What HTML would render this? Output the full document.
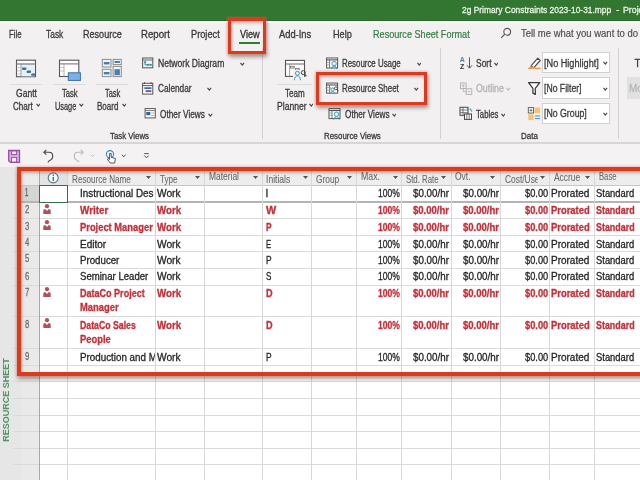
<!DOCTYPE html><html><head><meta charset="utf-8"><style>
html,body{margin:0;padding:0;width:640px;height:480px;overflow:hidden;background:#fff;position:relative;}#root{position:absolute;left:0;top:0;width:640px;height:480px;will-change:transform;}
.t{position:absolute;white-space:nowrap;line-height:1;font-family:"Liberation Sans", sans-serif;transform-origin:0 0;-webkit-text-stroke:0.3px currentColor;}
</style></head><body><div id="root">
<div style="position:absolute;left:0px;top:0px;width:640px;height:21px;background:#337631"></div>
<div style="position:absolute;left:0px;top:21px;width:640px;height:121px;background:#f2f0f0"></div>
<div style="position:absolute;left:0px;top:20px;width:640px;height:1px;background:#2c6a2f"></div>
<div style="position:absolute;left:0px;top:21px;width:640px;height:1.5px;background:#fafaf7"></div>
<div style="position:absolute;left:0px;top:142px;width:640px;height:1.5px;background:#d6d6d6"></div>
<div style="position:absolute;left:0px;top:143.5px;width:640px;height:24px;background:#f4f2f2"></div>
<div style="position:absolute;left:0px;top:167px;width:40px;height:313px;background:#e6e6e6"></div>
<div style="position:absolute;left:21px;top:171px;width:18.5px;height:309px;background:#e9e9e9"></div>
<div style="position:absolute;left:39px;top:167px;width:601px;height:18px;background:#ededed"></div>
<div style="position:absolute;left:39px;top:167px;width:28px;height:18px;background:#e3e3e3"></div>
<div style="position:absolute;left:21px;top:167px;width:18px;height:18px;background:#ebebeb"></div>
<div style="position:absolute;left:21px;top:186px;width:18px;height:15px;background:#d5d5d5"></div>
<div style="position:absolute;left:239.3px;top:41.8px;width:20.6px;height:2px;background:#2e7d32"></div>
<svg style="position:absolute;left:500px;top:27px" width="12" height="12" viewBox="0 0 12 12"><circle cx="7.2" cy="4.8" r="3.4" fill="none" stroke="#555" stroke-width="1.1"/><line x1="4.8" y1="7.2" x2="1.2" y2="10.8" stroke="#555" stroke-width="1.2"/></svg>
<svg style="position:absolute;left:35.5px;top:103.3px" width="4.6" height="4" viewBox="0 0 4.6 4"><polyline points="0.5,0.8 2.30,3 4.1,0.8" fill="none" stroke="#444" stroke-width="1.15"/></svg>
<svg style="position:absolute;left:79px;top:103.3px" width="4.6" height="4" viewBox="0 0 4.6 4"><polyline points="0.5,0.8 2.30,3 4.1,0.8" fill="none" stroke="#444" stroke-width="1.15"/></svg>
<svg style="position:absolute;left:121.8px;top:103.3px" width="4.6" height="4" viewBox="0 0 4.6 4"><polyline points="0.5,0.8 2.30,3 4.1,0.8" fill="none" stroke="#444" stroke-width="1.15"/></svg>
<svg style="position:absolute;left:308.6px;top:103.3px" width="4.6" height="4" viewBox="0 0 4.6 4"><polyline points="0.5,0.8 2.30,3 4.1,0.8" fill="none" stroke="#444" stroke-width="1.15"/></svg>
<div style="position:absolute;left:10px;top:84.2px;width:32px;height:1px;background:#dcdcdc"></div>
<div style="position:absolute;left:52.5px;top:84.2px;width:33.099999999999994px;height:1px;background:#dcdcdc"></div>
<div style="position:absolute;left:95.6px;top:84.2px;width:32.400000000000006px;height:1px;background:#dcdcdc"></div>
<div style="position:absolute;left:277.3px;top:84.2px;width:35.0px;height:1px;background:#dcdcdc"></div>
<div style="position:absolute;left:262px;top:48px;width:1px;height:91px;background:#d2d2d2"></div>
<div style="position:absolute;left:440px;top:48px;width:1px;height:91px;background:#d2d2d2"></div>
<div style="position:absolute;left:618px;top:48px;width:1px;height:91px;background:#d2d2d2"></div>
<svg style="position:absolute;left:240px;top:62.0px" width="4.6" height="4" viewBox="0 0 4.6 4"><polyline points="0.5,0.8 2.30,3 4.1,0.8" fill="none" stroke="#444" stroke-width="1.15"/></svg>
<svg style="position:absolute;left:207.2px;top:87.1px" width="4.6" height="4" viewBox="0 0 4.6 4"><polyline points="0.5,0.8 2.30,3 4.1,0.8" fill="none" stroke="#444" stroke-width="1.15"/></svg>
<svg style="position:absolute;left:208.3px;top:113.1px" width="4.6" height="4" viewBox="0 0 4.6 4"><polyline points="0.5,0.8 2.30,3 4.1,0.8" fill="none" stroke="#444" stroke-width="1.15"/></svg>
<svg style="position:absolute;left:416.5px;top:62.0px" width="4.6" height="4" viewBox="0 0 4.6 4"><polyline points="0.5,0.8 2.30,3 4.1,0.8" fill="none" stroke="#444" stroke-width="1.15"/></svg>
<svg style="position:absolute;left:414.3px;top:87.1px" width="4.6" height="4" viewBox="0 0 4.6 4"><polyline points="0.5,0.8 2.30,3 4.1,0.8" fill="none" stroke="#444" stroke-width="1.15"/></svg>
<svg style="position:absolute;left:391.5px;top:113.1px" width="4.6" height="4" viewBox="0 0 4.6 4"><polyline points="0.5,0.8 2.30,3 4.1,0.8" fill="none" stroke="#444" stroke-width="1.15"/></svg>
<svg style="position:absolute;left:493.5px;top:62.0px" width="4.6" height="4" viewBox="0 0 4.6 4"><polyline points="0.5,0.8 2.30,3 4.1,0.8" fill="none" stroke="#444" stroke-width="1.15"/></svg>
<svg style="position:absolute;left:506px;top:87.1px" width="4.6" height="4" viewBox="0 0 4.6 4"><polyline points="0.5,0.8 2.30,3 4.1,0.8" fill="none" stroke="#bbb" stroke-width="1.15"/></svg>
<svg style="position:absolute;left:500.8px;top:113.1px" width="4.6" height="4" viewBox="0 0 4.6 4"><polyline points="0.5,0.8 2.30,3 4.1,0.8" fill="none" stroke="#444" stroke-width="1.15"/></svg>
<div style="position:absolute;left:542.1px;top:52.3px;width:67.6px;height:21.200000000000003px;background:#fff;border:1px solid #d0d0d0;box-sizing:border-box"></div>
<svg style="position:absolute;left:603.3px;top:61.4px" width="4.6" height="4" viewBox="0 0 4.6 4"><polyline points="0.5,0.8 2.30,3 4.1,0.8" fill="none" stroke="#444" stroke-width="1.15"/></svg>
<div style="position:absolute;left:542.1px;top:77.3px;width:67.6px;height:21.5px;background:#fff;border:1px solid #d0d0d0;box-sizing:border-box"></div>
<svg style="position:absolute;left:603.3px;top:86.55px" width="4.6" height="4" viewBox="0 0 4.6 4"><polyline points="0.5,0.8 2.30,3 4.1,0.8" fill="none" stroke="#444" stroke-width="1.15"/></svg>
<div style="position:absolute;left:542.1px;top:102.5px;width:67.6px;height:21.599999999999994px;background:#fff;border:1px solid #d0d0d0;box-sizing:border-box"></div>
<svg style="position:absolute;left:603.3px;top:111.8px" width="4.6" height="4" viewBox="0 0 4.6 4"><polyline points="0.5,0.8 2.30,3 4.1,0.8" fill="none" stroke="#444" stroke-width="1.15"/></svg>
<div style="position:absolute;left:627.3px;top:77.2px;width:14px;height:22px;background:#e1e1e1"></div>
<div style="position:absolute;left:13px;top:218px;width:627px;height:1px;background:#dadada"></div>
<div style="position:absolute;left:13px;top:235px;width:627px;height:1px;background:#dadada"></div>
<div style="position:absolute;left:13px;top:251px;width:627px;height:1px;background:#dadada"></div>
<div style="position:absolute;left:13px;top:268px;width:627px;height:1px;background:#dadada"></div>
<div style="position:absolute;left:13px;top:285px;width:627px;height:1px;background:#dadada"></div>
<div style="position:absolute;left:13px;top:316px;width:627px;height:1px;background:#dadada"></div>
<div style="position:absolute;left:13px;top:348px;width:627px;height:1px;background:#dadada"></div>
<div style="position:absolute;left:13px;top:365px;width:627px;height:1px;background:#dadada"></div>
<div style="position:absolute;left:13px;top:381px;width:627px;height:1px;background:#dadada"></div>
<div style="position:absolute;left:13px;top:398px;width:627px;height:1px;background:#dadada"></div>
<div style="position:absolute;left:13px;top:415px;width:627px;height:1px;background:#dadada"></div>
<div style="position:absolute;left:13px;top:431px;width:627px;height:1px;background:#dadada"></div>
<div style="position:absolute;left:13px;top:448px;width:627px;height:1px;background:#dadada"></div>
<div style="position:absolute;left:13px;top:464px;width:627px;height:1px;background:#dadada"></div>
<div style="position:absolute;left:21px;top:185px;width:619px;height:1px;background:#c6c6c6"></div>
<div style="position:absolute;left:21px;top:201px;width:619px;height:2px;background:#b4b4b4"></div>
<div style="position:absolute;left:39px;top:171px;width:1px;height:309px;background:#a8a8a8"></div>
<div style="position:absolute;left:67px;top:171px;width:1px;height:309px;background:#d8d8d8"></div>
<div style="position:absolute;left:155px;top:171px;width:1px;height:309px;background:#d8d8d8"></div>
<div style="position:absolute;left:204px;top:171px;width:1px;height:309px;background:#d8d8d8"></div>
<div style="position:absolute;left:262px;top:171px;width:1px;height:309px;background:#d8d8d8"></div>
<div style="position:absolute;left:311px;top:171px;width:1px;height:309px;background:#d8d8d8"></div>
<div style="position:absolute;left:356px;top:171px;width:1px;height:309px;background:#d8d8d8"></div>
<div style="position:absolute;left:401px;top:171px;width:1px;height:309px;background:#d8d8d8"></div>
<div style="position:absolute;left:451px;top:171px;width:1px;height:309px;background:#d8d8d8"></div>
<div style="position:absolute;left:500px;top:171px;width:1px;height:309px;background:#d8d8d8"></div>
<div style="position:absolute;left:549px;top:171px;width:1px;height:309px;background:#d8d8d8"></div>
<div style="position:absolute;left:594px;top:171px;width:1px;height:309px;background:#d8d8d8"></div>
<div style="position:absolute;left:39px;top:185px;width:29px;height:18px;border:1.6px solid #35704a;box-sizing:border-box;background:#fff"></div>
<svg style="position:absolute;left:47px;top:171.5px" width="12" height="12" viewBox="0 0 12 12"><circle cx="6.2" cy="5.9" r="5" fill="#f4fbfd" stroke="#557a8e" stroke-width="1.1"/><rect x="5.7" y="4.9" width="1.1" height="4" fill="#2f3f4f"/><circle cx="6.25" cy="3.3" r="0.7" fill="#2f3f4f"/></svg>
<svg style="position:absolute;left:146px;top:176.2px" width="5" height="3" viewBox="0 0 5 3"><polygon points="0,0 5,0 2.5,3" fill="#555"/></svg>
<svg style="position:absolute;left:195px;top:176.2px" width="5" height="3" viewBox="0 0 5 3"><polygon points="0,0 5,0 2.5,3" fill="#555"/></svg>
<svg style="position:absolute;left:253px;top:176.2px" width="5" height="3" viewBox="0 0 5 3"><polygon points="0,0 5,0 2.5,3" fill="#555"/></svg>
<svg style="position:absolute;left:302.5px;top:176.2px" width="5" height="3" viewBox="0 0 5 3"><polygon points="0,0 5,0 2.5,3" fill="#555"/></svg>
<svg style="position:absolute;left:347px;top:176.2px" width="5" height="3" viewBox="0 0 5 3"><polygon points="0,0 5,0 2.5,3" fill="#555"/></svg>
<svg style="position:absolute;left:392.5px;top:176.2px" width="5" height="3" viewBox="0 0 5 3"><polygon points="0,0 5,0 2.5,3" fill="#555"/></svg>
<svg style="position:absolute;left:441.2px;top:176.2px" width="5" height="3" viewBox="0 0 5 3"><polygon points="0,0 5,0 2.5,3" fill="#555"/></svg>
<svg style="position:absolute;left:490px;top:176.2px" width="5" height="3" viewBox="0 0 5 3"><polygon points="0,0 5,0 2.5,3" fill="#555"/></svg>
<svg style="position:absolute;left:539.5px;top:176.2px" width="5" height="3" viewBox="0 0 5 3"><polygon points="0,0 5,0 2.5,3" fill="#555"/></svg>
<svg style="position:absolute;left:585px;top:176.2px" width="5" height="3" viewBox="0 0 5 3"><polygon points="0,0 5,0 2.5,3" fill="#555"/></svg>
<svg style="position:absolute;left:43.3px;top:203.5px" width="8" height="10" viewBox="0 0 8 10"><circle cx="4" cy="2.2" r="2.1" fill="#b0505a"/><path d="M0.3,10 L0.3,6.8 Q0.3,5 2.2,4.9 L4,6.9 L5.8,4.9 Q7.7,5 7.7,6.8 L7.7,10 Z" fill="#b0505a"/></svg>
<svg style="position:absolute;left:43.3px;top:220px" width="8" height="10" viewBox="0 0 8 10"><circle cx="4" cy="2.2" r="2.1" fill="#b0505a"/><path d="M0.3,10 L0.3,6.8 Q0.3,5 2.2,4.9 L4,6.9 L5.8,4.9 Q7.7,5 7.7,6.8 L7.7,10 Z" fill="#b0505a"/></svg>
<svg style="position:absolute;left:43.3px;top:287px" width="8" height="10" viewBox="0 0 8 10"><circle cx="4" cy="2.2" r="2.1" fill="#b0505a"/><path d="M0.3,10 L0.3,6.8 Q0.3,5 2.2,4.9 L4,6.9 L5.8,4.9 Q7.7,5 7.7,6.8 L7.7,10 Z" fill="#b0505a"/></svg>
<svg style="position:absolute;left:43.3px;top:318px" width="8" height="10" viewBox="0 0 8 10"><circle cx="4" cy="2.2" r="2.1" fill="#b0505a"/><path d="M0.3,10 L0.3,6.8 Q0.3,5 2.2,4.9 L4,6.9 L5.8,4.9 Q7.7,5 7.7,6.8 L7.7,10 Z" fill="#b0505a"/></svg>
<div style="position:absolute;left:-39.5px;top:395px;width:90px;height:10px;transform:rotate(-90deg);transform-origin:45px 5px;font-family:'Liberation Sans',sans-serif;font-size:9px;font-weight:700;color:#529466;text-align:center;line-height:10px;white-space:nowrap">RESOURCE SHEET</div>
<svg style="position:absolute;left:0;top:0" width="640" height="480" viewBox="0 0 640 480"><rect x="16.5" y="60.2" width="19" height="16.5" fill="#fff" stroke="#555" stroke-width="1.1"/><rect x="21.2" y="64.3" width="13.8" height="12" fill="#e3f1fa"/><line x1="16.5" y1="64" x2="35.5" y2="64" stroke="#8a8a8a" stroke-width="1.4"/><line x1="21" y1="64" x2="21" y2="76.7" stroke="#888" stroke-width="0.8"/><line x1="16.5" y1="67.5" x2="21" y2="67.5" stroke="#aaa" stroke-width="0.7"/><line x1="16.5" y1="70.8" x2="21" y2="70.8" stroke="#aaa" stroke-width="0.7"/><line x1="16.5" y1="74" x2="21" y2="74" stroke="#aaa" stroke-width="0.7"/><rect x="22" y="67.6" width="4.4" height="2.3" rx="0.8" fill="#3d6e9c"/><rect x="26.6" y="70.6" width="4.4" height="2.3" rx="0.8" fill="#3d6e9c"/><rect x="31.2" y="73.4" width="4.4" height="2.3" rx="0.8" fill="#3d6e9c"/><rect x="59.5" y="60.2" width="19.3" height="16.3" fill="#fff" stroke="#555" stroke-width="1.1"/><line x1="59.5" y1="63.9" x2="78.8" y2="63.9" stroke="#777" stroke-width="1.1"/><line x1="64" y1="63.9" x2="64" y2="76.5" stroke="#999" stroke-width="0.8"/><line x1="59.5" y1="67.5" x2="64" y2="67.5" stroke="#aaa" stroke-width="0.7"/><line x1="59.5" y1="71" x2="64" y2="71" stroke="#aaa" stroke-width="0.7"/><rect x="68.3" y="72.8" width="12.1" height="7.6" fill="#78b2e6" stroke="#3d6ea3" stroke-width="1"/><rect x="102.3" y="59.4" width="8.7" height="7.6" fill="#eef4f8" stroke="#8c8c8c" stroke-width="1"/><rect x="113.1" y="59.4" width="8.2" height="5.2" fill="#eef4f8" stroke="#8c8c8c" stroke-width="1"/><rect x="102.3" y="69.3" width="8.7" height="7.3" fill="#eef4f8" stroke="#8c8c8c" stroke-width="1"/><rect x="113.1" y="66.4" width="8.2" height="10.2" fill="#eef4f8" stroke="#8c8c8c" stroke-width="1"/><rect x="103.8" y="62" width="5.7" height="2.4" fill="#4a7db0"/><rect x="114.5" y="61" width="5.4" height="2" fill="#4a7db0"/><rect x="103.8" y="72" width="5.7" height="2.4" fill="#4a7db0"/><rect x="114.5" y="69.2" width="5.4" height="6" fill="#4a7db0"/><rect x="142.6" y="58" width="10.2" height="9.8" fill="#e9f6fb" stroke="#555" stroke-width="1"/><line x1="142.6" y1="60" x2="152.8" y2="60" stroke="#666" stroke-width="1"/><path d="M145,61.5 V64.8 H147.2 M147.2,64.8 H151" stroke="#3b8a9c" stroke-width="1" fill="none"/><circle cx="145.2" cy="62" r="1" fill="#3b8a9c"/><circle cx="147.8" cy="64.8" r="1.1" fill="#3b8a9c"/><circle cx="150.8" cy="64.8" r="1.1" fill="#3b8a9c"/><rect x="142.6" y="83.3" width="10.2" height="10.8" fill="#fff" stroke="#555" stroke-width="1"/><line x1="142.6" y1="85.6" x2="152.8" y2="85.6" stroke="#555" stroke-width="1"/><line x1="144.5" y1="82.3" x2="144.5" y2="84" stroke="#444" stroke-width="1"/><line x1="151" y1="82.3" x2="151" y2="84" stroke="#444" stroke-width="1"/><rect x="144.3" y="87.2" width="7.2" height="1.9" fill="#3c74b0"/><rect x="145.6" y="90.2" width="5.8" height="1.9" fill="#8a4aa3"/><rect x="145.1" y="108.6" width="10.2" height="9.3" fill="#fff" stroke="#555" stroke-width="1"/><line x1="145.1" y1="110.6" x2="155.3" y2="110.6" stroke="#777" stroke-width="1"/><rect x="146.3" y="112" width="4" height="3.2" fill="#2d5f9a"/><line x1="151.2" y1="113" x2="154.6" y2="113" stroke="#999" stroke-width="0.8"/><line x1="151.2" y1="115.5" x2="154.6" y2="115.5" stroke="#999" stroke-width="0.8"/><rect x="285.5" y="60.4" width="19" height="16" fill="#fff" stroke="#555" stroke-width="1.1"/><line x1="285.5" y1="64" x2="304.5" y2="64" stroke="#666" stroke-width="1"/><line x1="289.6" y1="64" x2="289.6" y2="76.4" stroke="#888" stroke-width="0.8"/><rect x="290.6" y="66.3" width="3.6" height="1.8" fill="none" stroke="#666" stroke-width="0.8"/><rect x="295.6" y="68.3" width="3.6" height="1.8" fill="none" stroke="#666" stroke-width="0.8"/><rect x="293" y="70" width="11" height="10.8" fill="#f3f2f1"/><circle cx="297.4" cy="73.3" r="2" fill="#e2f3f8" stroke="#3e9bb5" stroke-width="1"/><path d="M294.3,80.3 Q294.8,75.8 297.4,75.8 Q300,75.8 300.5,80.3" fill="none" stroke="#3e9bb5" stroke-width="1"/><circle cx="303.3" cy="72.6" r="2" fill="none" stroke="#444" stroke-width="1"/><line x1="304.7" y1="74.1" x2="306.4" y2="76.4" stroke="#444" stroke-width="1.1"/><rect x="326.6" y="58" width="11" height="10" fill="#fff" stroke="#555" stroke-width="1"/><line x1="326.6" y1="59.9" x2="337.6" y2="59.9" stroke="#555" stroke-width="1.1"/><line x1="329.6" y1="59.9" x2="329.6" y2="68" stroke="#666" stroke-width="0.9"/><line x1="326.6" y1="62.5" x2="329.6" y2="62.5" stroke="#888" stroke-width="0.7"/><line x1="326.6" y1="65" x2="329.6" y2="65" stroke="#888" stroke-width="0.7"/><circle cx="334.1" cy="63.6" r="2.2" fill="#e0f4fa" stroke="#3e9bb5" stroke-width="1"/><path d="M331.40000000000003,69 Q331.90000000000003,66 334.1,66 Q336.3,66 336.8,69" fill="none" stroke="#3e9bb5" stroke-width="1"/><rect x="326.6" y="83.1" width="11" height="10" fill="#fff" stroke="#555" stroke-width="1"/><line x1="326.6" y1="85.0" x2="337.6" y2="85.0" stroke="#555" stroke-width="1.1"/><line x1="329.6" y1="85.0" x2="329.6" y2="93.1" stroke="#666" stroke-width="0.9"/><line x1="326.6" y1="87.6" x2="329.6" y2="87.6" stroke="#888" stroke-width="0.7"/><line x1="326.6" y1="90.1" x2="329.6" y2="90.1" stroke="#888" stroke-width="0.7"/><line x1="329.6" y1="88.1" x2="333.6" y2="88.1" stroke="#888" stroke-width="0.7"/><circle cx="332.6" cy="89.69999999999999" r="1.6" fill="#e0f4fa" stroke="#3e9bb5" stroke-width="0.9"/><path d="M330.40000000000003,94.1 Q330.8,91.5 332.6,91.5 Q334.40000000000003,91.5 334.8,94.1" fill="none" stroke="#3e9bb5" stroke-width="0.9"/><circle cx="335.90000000000003" cy="88.3" r="1.5" fill="none" stroke="#444" stroke-width="0.9"/><line x1="336.90000000000003" y1="89.39999999999999" x2="338.40000000000003" y2="91.1" stroke="#444" stroke-width="1"/><rect x="329" y="108.6" width="11" height="10" fill="#fff" stroke="#555" stroke-width="1"/><line x1="329" y1="110.5" x2="340" y2="110.5" stroke="#555" stroke-width="1.1"/><line x1="332" y1="110.5" x2="332" y2="118.6" stroke="#666" stroke-width="0.9"/><line x1="329" y1="113.1" x2="332" y2="113.1" stroke="#888" stroke-width="0.7"/><line x1="329" y1="115.6" x2="332" y2="115.6" stroke="#888" stroke-width="0.7"/><circle cx="336.5" cy="114.19999999999999" r="2.2" fill="#e0f4fa" stroke="#3e9bb5" stroke-width="1"/><path d="M333.8,119.6 Q334.3,116.6 336.5,116.6 Q338.7,116.6 339.2,119.6" fill="none" stroke="#3e9bb5" stroke-width="1"/><text x="459.8" y="61.8" font-family="Liberation Sans" font-size="7" font-weight="700" fill="#3f86c0">A</text><text x="460" y="68.7" font-family="Liberation Sans" font-size="7" font-weight="700" fill="#333">Z</text><line x1="469.5" y1="57.3" x2="469.5" y2="68" stroke="#555" stroke-width="1"/><polyline points="467,65.3 469.5,68.2 472,65.3" fill="none" stroke="#555" stroke-width="1"/><rect x="460.5" y="83" width="5.6" height="5.6" fill="none" stroke="#b0b0b0" stroke-width="0.9"/><path d="M461.8,85.8 H464.8 M463.3,84.3 V87.3" stroke="#b0b0b0" stroke-width="0.8"/><rect x="466.2" y="88.8" width="5.6" height="5.6" fill="none" stroke="#b0b0b0" stroke-width="0.9"/><path d="M467.5,91.6 H470.5" stroke="#b0b0b0" stroke-width="0.8"/><path d="M463.3,88.6 V91.6 H466.2" fill="none" stroke="#b0b0b0" stroke-width="0.8"/><rect x="460" y="107.3" width="8" height="8" fill="#fff" stroke="#444" stroke-width="1"/><path d="M460,110 H468 M460,112.7 H468 M463,107.3 V115.3" stroke="#555" stroke-width="0.8"/><rect x="464.5" y="114" width="7" height="5.4" fill="#fff" stroke="#444" stroke-width="1"/><path d="M466.8,114 V119.4 M469.2,114 V119.4" stroke="#555" stroke-width="0.8"/><path d="M467,108 L469,110.2 M470,108.5 L472,111.5" stroke="#3e9bb5" stroke-width="1.1"/><path d="M531.2,65.6 L537.8,58.2 L540.2,60.5 L533.6,67.9 Z" fill="#fff" stroke="#4a4a4a" stroke-width="1.2" stroke-linejoin="round"/><path d="M531.2,65.6 L533.6,67.9 L529.5,68.6 Z" fill="#e58a2e" stroke="#c96f1c" stroke-width="0.6"/><path d="M528.4,68.6 Q532,66.6 535,68 Q537.5,69 540.5,68.2" fill="none" stroke="#e89a3c" stroke-width="1.4"/><path d="M528.6,82.6 H539.7 L535.3,88.4 V94.4 L532.9,93.1 V88.4 Z" fill="#fff" stroke="#3a3a3a" stroke-width="1.25" stroke-linejoin="round"/><rect x="528.3" y="107.6" width="5.3" height="5.4" fill="#fff" stroke="#555" stroke-width="0.9"/><path d="M529.5,110.3 H532.4 M531,108.8 V111.8" stroke="#555" stroke-width="0.8"/><rect x="534.6" y="107.6" width="5.4" height="5.4" fill="#f6c46e"/><rect x="528.3" y="114.3" width="5.3" height="5.8" fill="#f6c46e"/><path d="M535,116 H540 M535,118.6 H540" stroke="#4c8cc8" stroke-width="1"/><path d="M8.7,150.5 H19.5 V162.3 H10.3 L8.7,160.7 Z" fill="#d9aee3" stroke="#9a4ea6" stroke-width="1.3"/><rect x="11.6" y="151" width="5" height="3.6" fill="#f8ecfa" stroke="#9a4ea6" stroke-width="1"/><rect x="11.6" y="157.6" width="5" height="4.4" fill="#fff" stroke="#9a4ea6" stroke-width="1"/><path d="M44.5,152.3 H49 Q52.7,152.3 52.7,156 Q52.7,159.5 49.5,160.5 L47.8,162.5" fill="none" stroke="#444" stroke-width="1.1"/><polyline points="46.3,150 43.8,152.3 46.3,154.6" fill="none" stroke="#444" stroke-width="1.1"/><path d="M81.5,152.3 H78 Q74.3,152.3 74.3,156 Q74.3,159.5 77.5,160.5 L79.2,162" fill="none" stroke="#b8b8b8" stroke-width="1.1"/><polyline points="80.7,150 83.2,152.3 80.7,154.6" fill="none" stroke="#b8b8b8" stroke-width="1.1"/><polyline points="90.6,154.8 92.5,156.6 94.4,154.8" fill="none" stroke="#bbb" stroke-width="0.9"/><circle cx="110" cy="154.2" r="3.6" fill="none" stroke="#3d86c6" stroke-width="1.1"/><path d="M109.6,153.5 V159.5 L108,158.4 L107.5,159.5 L110.3,163 H114.6 L115.4,158.5 L111.2,157.3 V153.5 Z" fill="#fff" stroke="#444" stroke-width="0.9"/><polyline points="121.8,154.8 123.7,156.6 125.6,154.8" fill="none" stroke="#444" stroke-width="1"/><line x1="144.2" y1="153.6" x2="148.8" y2="153.6" stroke="#444" stroke-width="0.9"/><polyline points="144.3,155.6 146.5,157.8 148.7,155.6" fill="none" stroke="#444" stroke-width="1"/></svg>
<span class="t" style="left:461.90px;top:5.00px;font-size:9.4px;color:#eaf5e6;font-weight:400;transform:scaleX(0.8942);">2g Primary Constraints 2023-10-31.mpp</span>
<span class="t" style="left:616.00px;top:5.00px;font-size:9.4px;color:#eaf5e6;font-weight:400;transform:scaleX(1.1200);">-</span>
<span class="t" style="left:622.80px;top:5.00px;font-size:9.4px;color:#eaf5e6;font-weight:400;transform:scaleX(0.9365);">Proje</span>
<span class="t" style="left:8.75px;top:29.00px;font-size:10.5px;color:#3a3a3a;font-weight:400;transform:scaleX(0.7387);">File</span>
<span class="t" style="left:45.90px;top:29.00px;font-size:10.5px;color:#3a3a3a;font-weight:400;transform:scaleX(0.8012);">Task</span>
<span class="t" style="left:82.50px;top:29.00px;font-size:10.5px;color:#3a3a3a;font-weight:400;transform:scaleX(0.8620);">Resource</span>
<span class="t" style="left:141.00px;top:29.00px;font-size:10.5px;color:#3a3a3a;font-weight:400;transform:scaleX(0.9202);">Report</span>
<span class="t" style="left:190.50px;top:29.00px;font-size:10.5px;color:#3a3a3a;font-weight:400;transform:scaleX(0.8795);">Project</span>
<span class="t" style="left:239.50px;top:29.00px;font-size:10.5px;color:#333;font-weight:400;transform:scaleX(0.8747);">View</span>
<span class="t" style="left:279.40px;top:29.00px;font-size:10.5px;color:#3a3a3a;font-weight:400;transform:scaleX(0.8898);">Add-Ins</span>
<span class="t" style="left:332.50px;top:29.00px;font-size:10.5px;color:#3a3a3a;font-weight:400;transform:scaleX(0.8677);">Help</span>
<span class="t" style="left:373.30px;top:29.00px;font-size:10.5px;color:#327d40;font-weight:400;transform:scaleX(0.8675);-webkit-text-stroke:0.2px currentColor;">Resource Sheet Format</span>
<span class="t" style="left:520.60px;top:28.00px;font-size:10.5px;color:#4a4a4a;font-weight:400;transform:scaleX(0.9029);-webkit-text-stroke:0.15px currentColor;">Tell me what you want to do</span>
<span class="t" style="left:15.60px;top:89.00px;font-size:10px;color:#3a3a3a;font-weight:400;transform:scaleX(0.8542);">Gantt</span>
<span class="t" style="left:12.70px;top:102.00px;font-size:10px;color:#3a3a3a;font-weight:400;transform:scaleX(0.8056);">Chart</span>
<span class="t" style="left:61.50px;top:89.00px;font-size:10px;color:#3a3a3a;font-weight:400;transform:scaleX(0.7587);">Task</span>
<span class="t" style="left:54.80px;top:102.00px;font-size:10px;color:#3a3a3a;font-weight:400;transform:scaleX(0.7369);">Usage</span>
<span class="t" style="left:104.50px;top:89.00px;font-size:10px;color:#3a3a3a;font-weight:400;transform:scaleX(0.7441);">Task</span>
<span class="t" style="left:97.40px;top:102.00px;font-size:10px;color:#3a3a3a;font-weight:400;transform:scaleX(0.8000);">Board</span>
<span class="t" style="left:285.30px;top:89.00px;font-size:10px;color:#3a3a3a;font-weight:400;transform:scaleX(0.8056);">Team</span>
<span class="t" style="left:276.60px;top:102.00px;font-size:10px;color:#3a3a3a;font-weight:400;transform:scaleX(0.8587);">Planner</span>
<span class="t" style="left:109.80px;top:132.00px;font-size:9.0px;color:#3a3a3a;font-weight:400;transform:scaleX(0.8694);">Task Views</span>
<span class="t" style="left:323.50px;top:132.00px;font-size:9.0px;color:#3a3a3a;font-weight:400;transform:scaleX(0.8755);">Resource Views</span>
<span class="t" style="left:520.60px;top:132.00px;font-size:9.0px;color:#3a3a3a;font-weight:400;transform:scaleX(0.8887);">Data</span>
<span class="t" style="left:157.80px;top:59.00px;font-size:10px;color:#3a3a3a;font-weight:400;transform:scaleX(0.8583);">Network Diagram</span>
<span class="t" style="left:157.80px;top:84.00px;font-size:10px;color:#3a3a3a;font-weight:400;transform:scaleX(0.8253);">Calendar</span>
<span class="t" style="left:160.00px;top:110.00px;font-size:10px;color:#3a3a3a;font-weight:400;transform:scaleX(0.8288);">Other Views</span>
<span class="t" style="left:342.25px;top:59.00px;font-size:10px;color:#3a3a3a;font-weight:400;transform:scaleX(0.7888);">Resource Usage</span>
<span class="t" style="left:342.25px;top:84.00px;font-size:10px;color:#3a3a3a;font-weight:400;transform:scaleX(0.7913);">Resource Sheet</span>
<span class="t" style="left:344.70px;top:110.00px;font-size:10px;color:#3a3a3a;font-weight:400;transform:scaleX(0.8196);">Other Views</span>
<span class="t" style="left:475.50px;top:59.00px;font-size:10px;color:#3a3a3a;font-weight:400;transform:scaleX(0.8450);">Sort</span>
<span class="t" style="left:476.00px;top:84.00px;font-size:10px;color:#b4b4b4;font-weight:400;transform:scaleX(0.8805);">Outline</span>
<span class="t" style="left:476.40px;top:110.00px;font-size:10px;color:#3a3a3a;font-weight:400;transform:scaleX(0.7715);">Tables</span>
<span class="t" style="left:544.40px;top:59.00px;font-size:10px;color:#3a3a3a;font-weight:400;transform:scaleX(0.9129);">[No Highlight]</span>
<span class="t" style="left:544.40px;top:84.00px;font-size:10px;color:#3a3a3a;font-weight:400;transform:scaleX(0.8652);">[No Filter]</span>
<span class="t" style="left:544.40px;top:109.00px;font-size:10px;color:#3a3a3a;font-weight:400;transform:scaleX(0.8749);">[No Group]</span>
<span class="t" style="left:634.50px;top:59.00px;font-size:10px;color:#3a3a3a;font-weight:400;">T</span>
<span class="t" style="left:629.00px;top:84.00px;font-size:10px;color:#b8b8b8;font-weight:400;">Mo</span>
<span class="t" style="left:71.50px;top:175.00px;font-size:10.2px;color:#6b6b6b;font-weight:400;transform:scaleX(0.8002);-webkit-text-stroke:0.1px currentColor;">Resource Name</span>
<span class="t" style="left:159.50px;top:175.00px;font-size:10.2px;color:#6b6b6b;font-weight:400;transform:scaleX(0.7921);-webkit-text-stroke:0.1px currentColor;">Type</span>
<span class="t" style="left:208.75px;top:172.00px;font-size:10.2px;color:#6b6b6b;font-weight:400;transform:scaleX(0.8279);-webkit-text-stroke:0.1px currentColor;">Material</span>
<span class="t" style="left:266.25px;top:175.00px;font-size:10.2px;color:#6b6b6b;font-weight:400;transform:scaleX(0.8394);-webkit-text-stroke:0.1px currentColor;">Initials</span>
<span class="t" style="left:315.50px;top:175.00px;font-size:10.2px;color:#6b6b6b;font-weight:400;transform:scaleX(0.8207);-webkit-text-stroke:0.1px currentColor;">Group</span>
<span class="t" style="left:360.90px;top:172.00px;font-size:10.2px;color:#6b6b6b;font-weight:400;transform:scaleX(0.8606);-webkit-text-stroke:0.1px currentColor;">Max.</span>
<span class="t" style="left:406.25px;top:175.00px;font-size:10.2px;color:#6b6b6b;font-weight:400;transform:scaleX(0.7650);-webkit-text-stroke:0.1px currentColor;">Std. Rate</span>
<span class="t" style="left:455.00px;top:172.00px;font-size:10.2px;color:#6b6b6b;font-weight:400;transform:scaleX(0.8294);-webkit-text-stroke:0.1px currentColor;">Ovt.</span>
<span class="t" style="left:504.50px;top:175.00px;font-size:10.2px;color:#6b6b6b;font-weight:400;transform:scaleX(0.8233);clip-path:inset(-5px 2.06px -5px -5px);-webkit-text-stroke:0.1px currentColor;">Cost/Use</span>
<span class="t" style="left:553.75px;top:173.00px;font-size:10.2px;color:#6b6b6b;font-weight:400;transform:scaleX(0.8276);-webkit-text-stroke:0.1px currentColor;">Accrue</span>
<span class="t" style="left:598.75px;top:172.00px;font-size:10.2px;color:#6b6b6b;font-weight:400;transform:scaleX(0.7532);-webkit-text-stroke:0.1px currentColor;">Base</span>
<span class="t" style="left:25.00px;top:188.00px;font-size:10.4px;color:#3d6b48;font-weight:400;transform:scaleX(0.5708);">1</span>
<span class="t" style="left:24.90px;top:205.00px;font-size:10.4px;color:#6e6e6e;font-weight:400;transform:scaleX(0.7438);">2</span>
<span class="t" style="left:24.90px;top:222.00px;font-size:10.4px;color:#6e6e6e;font-weight:400;transform:scaleX(0.7438);">3</span>
<span class="t" style="left:24.90px;top:238.00px;font-size:10.4px;color:#6e6e6e;font-weight:400;transform:scaleX(0.7438);">4</span>
<span class="t" style="left:24.90px;top:254.00px;font-size:10.4px;color:#6e6e6e;font-weight:400;transform:scaleX(0.7438);">5</span>
<span class="t" style="left:24.90px;top:272.00px;font-size:10.4px;color:#6e6e6e;font-weight:400;transform:scaleX(0.7438);">6</span>
<span class="t" style="left:24.90px;top:288.00px;font-size:10.4px;color:#6e6e6e;font-weight:400;transform:scaleX(0.7438);">7</span>
<span class="t" style="left:24.90px;top:320.00px;font-size:10.4px;color:#6e6e6e;font-weight:400;transform:scaleX(0.7438);">8</span>
<span class="t" style="left:24.90px;top:352.00px;font-size:10.4px;color:#6e6e6e;font-weight:400;transform:scaleX(0.7438);">9</span>
<span class="t" style="left:79.60px;top:189.00px;font-size:10.3px;color:#262626;font-weight:400;transform:scaleX(0.9582);">Instructional Des</span>
<span class="t" style="left:156.90px;top:189.00px;font-size:10.3px;color:#262626;font-weight:400;transform:scaleX(0.9898);">Work</span>
<span class="t" style="left:265.60px;top:189.00px;font-size:10.3px;color:#262626;font-weight:400;">I</span>
<span class="t" style="left:377.80px;top:189.00px;font-size:10.3px;color:#262626;font-weight:400;transform:scaleX(0.8275);">100%</span>
<span class="t" style="left:413.10px;top:189.00px;font-size:10.3px;color:#262626;font-weight:400;transform:scaleX(0.9498);">$0.00/hr</span>
<span class="t" style="left:463.00px;top:189.00px;font-size:10.3px;color:#262626;font-weight:400;transform:scaleX(0.9525);">$0.00/hr</span>
<span class="t" style="left:524.50px;top:189.00px;font-size:10.3px;color:#262626;font-weight:400;transform:scaleX(0.8999);">$0.00</span>
<span class="t" style="left:551.40px;top:189.00px;font-size:10.3px;color:#262626;font-weight:400;transform:scaleX(0.9696);">Prorated</span>
<span class="t" style="left:596.40px;top:189.00px;font-size:10.3px;color:#262626;font-weight:400;transform:scaleX(0.9139);">Standard</span>
<span class="t" style="left:79.60px;top:206.00px;font-size:10.4px;color:#c2303a;font-weight:700;-webkit-text-stroke:0.3px currentColor;transform:scaleX(0.9499);">Writer</span>
<span class="t" style="left:156.90px;top:206.00px;font-size:10.4px;color:#c2303a;font-weight:700;-webkit-text-stroke:0.3px currentColor;transform:scaleX(0.9381);">Work</span>
<span class="t" style="left:265.60px;top:206.00px;font-size:10.4px;color:#c2303a;font-weight:700;-webkit-text-stroke:0.3px currentColor;transform:scaleX(1.0395);">W</span>
<span class="t" style="left:377.80px;top:206.00px;font-size:10.4px;color:#c2303a;font-weight:700;-webkit-text-stroke:0.3px currentColor;transform:scaleX(0.8202);">100%</span>
<span class="t" style="left:413.10px;top:206.00px;font-size:10.4px;color:#c2303a;font-weight:700;-webkit-text-stroke:0.3px currentColor;transform:scaleX(0.9139);">$0.00/hr</span>
<span class="t" style="left:463.00px;top:206.00px;font-size:10.4px;color:#c2303a;font-weight:700;-webkit-text-stroke:0.3px currentColor;transform:scaleX(0.9165);">$0.00/hr</span>
<span class="t" style="left:524.50px;top:206.00px;font-size:10.4px;color:#c2303a;font-weight:700;-webkit-text-stroke:0.3px currentColor;transform:scaleX(0.8918);">$0.00</span>
<span class="t" style="left:551.40px;top:206.00px;font-size:10.4px;color:#c2303a;font-weight:700;-webkit-text-stroke:0.3px currentColor;transform:scaleX(0.9056);">Prorated</span>
<span class="t" style="left:596.40px;top:206.00px;font-size:10.4px;color:#c2303a;font-weight:700;-webkit-text-stroke:0.3px currentColor;transform:scaleX(0.8569);">Standard</span>
<span class="t" style="left:79.60px;top:223.00px;font-size:10.4px;color:#c2303a;font-weight:700;-webkit-text-stroke:0.3px currentColor;transform:scaleX(0.9005);">Project Manager</span>
<span class="t" style="left:156.90px;top:223.00px;font-size:10.4px;color:#c2303a;font-weight:700;-webkit-text-stroke:0.3px currentColor;transform:scaleX(0.9381);">Work</span>
<span class="t" style="left:265.60px;top:223.00px;font-size:10.4px;color:#c2303a;font-weight:700;-webkit-text-stroke:0.3px currentColor;transform:scaleX(0.8072);">P</span>
<span class="t" style="left:377.80px;top:223.00px;font-size:10.4px;color:#c2303a;font-weight:700;-webkit-text-stroke:0.3px currentColor;transform:scaleX(0.8202);">100%</span>
<span class="t" style="left:413.10px;top:223.00px;font-size:10.4px;color:#c2303a;font-weight:700;-webkit-text-stroke:0.3px currentColor;transform:scaleX(0.9139);">$0.00/hr</span>
<span class="t" style="left:463.00px;top:223.00px;font-size:10.4px;color:#c2303a;font-weight:700;-webkit-text-stroke:0.3px currentColor;transform:scaleX(0.9165);">$0.00/hr</span>
<span class="t" style="left:524.50px;top:223.00px;font-size:10.4px;color:#c2303a;font-weight:700;-webkit-text-stroke:0.3px currentColor;transform:scaleX(0.8918);">$0.00</span>
<span class="t" style="left:551.40px;top:223.00px;font-size:10.4px;color:#c2303a;font-weight:700;-webkit-text-stroke:0.3px currentColor;transform:scaleX(0.9056);">Prorated</span>
<span class="t" style="left:596.40px;top:223.00px;font-size:10.4px;color:#c2303a;font-weight:700;-webkit-text-stroke:0.3px currentColor;transform:scaleX(0.8569);">Standard</span>
<span class="t" style="left:79.60px;top:240.00px;font-size:10.3px;color:#262626;font-weight:400;transform:scaleX(0.9700);">Editor</span>
<span class="t" style="left:156.90px;top:240.00px;font-size:10.3px;color:#262626;font-weight:400;transform:scaleX(0.9898);">Work</span>
<span class="t" style="left:265.60px;top:240.00px;font-size:10.3px;color:#262626;font-weight:400;transform:scaleX(0.7564);">E</span>
<span class="t" style="left:377.80px;top:240.00px;font-size:10.3px;color:#262626;font-weight:400;transform:scaleX(0.8275);">100%</span>
<span class="t" style="left:413.10px;top:240.00px;font-size:10.3px;color:#262626;font-weight:400;transform:scaleX(0.9498);">$0.00/hr</span>
<span class="t" style="left:463.00px;top:240.00px;font-size:10.3px;color:#262626;font-weight:400;transform:scaleX(0.9525);">$0.00/hr</span>
<span class="t" style="left:524.50px;top:240.00px;font-size:10.3px;color:#262626;font-weight:400;transform:scaleX(0.8999);">$0.00</span>
<span class="t" style="left:551.40px;top:240.00px;font-size:10.3px;color:#262626;font-weight:400;transform:scaleX(0.9696);">Prorated</span>
<span class="t" style="left:596.40px;top:240.00px;font-size:10.3px;color:#262626;font-weight:400;transform:scaleX(0.9139);">Standard</span>
<span class="t" style="left:79.60px;top:256.00px;font-size:10.3px;color:#262626;font-weight:400;transform:scaleX(0.9418);">Producer</span>
<span class="t" style="left:156.90px;top:256.00px;font-size:10.3px;color:#262626;font-weight:400;transform:scaleX(0.9898);">Work</span>
<span class="t" style="left:265.60px;top:256.00px;font-size:10.3px;color:#262626;font-weight:400;transform:scaleX(0.8145);">P</span>
<span class="t" style="left:377.80px;top:256.00px;font-size:10.3px;color:#262626;font-weight:400;transform:scaleX(0.8275);">100%</span>
<span class="t" style="left:413.10px;top:256.00px;font-size:10.3px;color:#262626;font-weight:400;transform:scaleX(0.9498);">$0.00/hr</span>
<span class="t" style="left:463.00px;top:256.00px;font-size:10.3px;color:#262626;font-weight:400;transform:scaleX(0.9525);">$0.00/hr</span>
<span class="t" style="left:524.50px;top:256.00px;font-size:10.3px;color:#262626;font-weight:400;transform:scaleX(0.8999);">$0.00</span>
<span class="t" style="left:551.40px;top:256.00px;font-size:10.3px;color:#262626;font-weight:400;transform:scaleX(0.9696);">Prorated</span>
<span class="t" style="left:596.40px;top:256.00px;font-size:10.3px;color:#262626;font-weight:400;transform:scaleX(0.9139);">Standard</span>
<span class="t" style="left:79.60px;top:272.00px;font-size:10.3px;color:#262626;font-weight:400;transform:scaleX(0.9315);">Seminar Leader</span>
<span class="t" style="left:156.90px;top:272.00px;font-size:10.3px;color:#262626;font-weight:400;transform:scaleX(0.9898);">Work</span>
<span class="t" style="left:265.60px;top:272.00px;font-size:10.3px;color:#262626;font-weight:400;transform:scaleX(0.7855);">S</span>
<span class="t" style="left:377.80px;top:272.00px;font-size:10.3px;color:#262626;font-weight:400;transform:scaleX(0.8275);">100%</span>
<span class="t" style="left:413.10px;top:272.00px;font-size:10.3px;color:#262626;font-weight:400;transform:scaleX(0.9498);">$0.00/hr</span>
<span class="t" style="left:463.00px;top:272.00px;font-size:10.3px;color:#262626;font-weight:400;transform:scaleX(0.9525);">$0.00/hr</span>
<span class="t" style="left:524.50px;top:272.00px;font-size:10.3px;color:#262626;font-weight:400;transform:scaleX(0.8999);">$0.00</span>
<span class="t" style="left:551.40px;top:272.00px;font-size:10.3px;color:#262626;font-weight:400;transform:scaleX(0.9696);">Prorated</span>
<span class="t" style="left:596.40px;top:272.00px;font-size:10.3px;color:#262626;font-weight:400;transform:scaleX(0.9139);">Standard</span>
<span class="t" style="left:79.60px;top:289.00px;font-size:10.4px;color:#c2303a;font-weight:700;-webkit-text-stroke:0.3px currentColor;transform:scaleX(0.8685);">DataCo Project</span>
<span class="t" style="left:79.60px;top:303.00px;font-size:10.4px;color:#c2303a;font-weight:700;-webkit-text-stroke:0.3px currentColor;transform:scaleX(0.9033);">Manager</span>
<span class="t" style="left:156.90px;top:289.00px;font-size:10.4px;color:#c2303a;font-weight:700;-webkit-text-stroke:0.3px currentColor;transform:scaleX(0.9381);">Work</span>
<span class="t" style="left:265.60px;top:289.00px;font-size:10.4px;color:#c2303a;font-weight:700;-webkit-text-stroke:0.3px currentColor;transform:scaleX(0.8782);">D</span>
<span class="t" style="left:377.80px;top:289.00px;font-size:10.4px;color:#c2303a;font-weight:700;-webkit-text-stroke:0.3px currentColor;transform:scaleX(0.8202);">100%</span>
<span class="t" style="left:413.10px;top:289.00px;font-size:10.4px;color:#c2303a;font-weight:700;-webkit-text-stroke:0.3px currentColor;transform:scaleX(0.9139);">$0.00/hr</span>
<span class="t" style="left:463.00px;top:289.00px;font-size:10.4px;color:#c2303a;font-weight:700;-webkit-text-stroke:0.3px currentColor;transform:scaleX(0.9165);">$0.00/hr</span>
<span class="t" style="left:524.50px;top:289.00px;font-size:10.4px;color:#c2303a;font-weight:700;-webkit-text-stroke:0.3px currentColor;transform:scaleX(0.8918);">$0.00</span>
<span class="t" style="left:551.40px;top:289.00px;font-size:10.4px;color:#c2303a;font-weight:700;-webkit-text-stroke:0.3px currentColor;transform:scaleX(0.9056);">Prorated</span>
<span class="t" style="left:596.40px;top:289.00px;font-size:10.4px;color:#c2303a;font-weight:700;-webkit-text-stroke:0.3px currentColor;transform:scaleX(0.8569);">Standard</span>
<span class="t" style="left:79.60px;top:321.00px;font-size:10.4px;color:#c2303a;font-weight:700;-webkit-text-stroke:0.3px currentColor;transform:scaleX(0.8401);">DataCo Sales</span>
<span class="t" style="left:79.60px;top:335.00px;font-size:10.4px;color:#c2303a;font-weight:700;-webkit-text-stroke:0.3px currentColor;transform:scaleX(0.9009);">People</span>
<span class="t" style="left:156.90px;top:321.00px;font-size:10.4px;color:#c2303a;font-weight:700;-webkit-text-stroke:0.3px currentColor;transform:scaleX(0.9381);">Work</span>
<span class="t" style="left:265.60px;top:321.00px;font-size:10.4px;color:#c2303a;font-weight:700;-webkit-text-stroke:0.3px currentColor;transform:scaleX(0.8782);">D</span>
<span class="t" style="left:377.80px;top:321.00px;font-size:10.4px;color:#c2303a;font-weight:700;-webkit-text-stroke:0.3px currentColor;transform:scaleX(0.8202);">100%</span>
<span class="t" style="left:413.10px;top:321.00px;font-size:10.4px;color:#c2303a;font-weight:700;-webkit-text-stroke:0.3px currentColor;transform:scaleX(0.9139);">$0.00/hr</span>
<span class="t" style="left:463.00px;top:321.00px;font-size:10.4px;color:#c2303a;font-weight:700;-webkit-text-stroke:0.3px currentColor;transform:scaleX(0.9165);">$0.00/hr</span>
<span class="t" style="left:524.50px;top:321.00px;font-size:10.4px;color:#c2303a;font-weight:700;-webkit-text-stroke:0.3px currentColor;transform:scaleX(0.8918);">$0.00</span>
<span class="t" style="left:551.40px;top:321.00px;font-size:10.4px;color:#c2303a;font-weight:700;-webkit-text-stroke:0.3px currentColor;transform:scaleX(0.9056);">Prorated</span>
<span class="t" style="left:596.40px;top:321.00px;font-size:10.4px;color:#c2303a;font-weight:700;-webkit-text-stroke:0.3px currentColor;transform:scaleX(0.8569);">Standard</span>
<span class="t" style="left:79.60px;top:353.00px;font-size:10.3px;color:#262626;font-weight:400;transform:scaleX(0.9515);clip-path:inset(-5px 2.00px -5px -5px);">Production and M</span>
<span class="t" style="left:156.90px;top:353.00px;font-size:10.3px;color:#262626;font-weight:400;transform:scaleX(0.9898);">Work</span>
<span class="t" style="left:265.60px;top:353.00px;font-size:10.3px;color:#262626;font-weight:400;transform:scaleX(0.8145);">P</span>
<span class="t" style="left:377.80px;top:353.00px;font-size:10.3px;color:#262626;font-weight:400;transform:scaleX(0.8275);">100%</span>
<span class="t" style="left:413.10px;top:353.00px;font-size:10.3px;color:#262626;font-weight:400;transform:scaleX(0.9498);">$0.00/hr</span>
<span class="t" style="left:463.00px;top:353.00px;font-size:10.3px;color:#262626;font-weight:400;transform:scaleX(0.9525);">$0.00/hr</span>
<span class="t" style="left:524.50px;top:353.00px;font-size:10.3px;color:#262626;font-weight:400;transform:scaleX(0.8999);">$0.00</span>
<span class="t" style="left:551.40px;top:353.00px;font-size:10.3px;color:#262626;font-weight:400;transform:scaleX(0.9696);">Prorated</span>
<span class="t" style="left:596.40px;top:353.00px;font-size:10.3px;color:#262626;font-weight:400;transform:scaleX(0.9139);">Standard</span>
<div style="position:absolute;left:228.3px;top:17.8px;width:37.5px;height:36.5px;box-sizing:border-box;border:3.6px solid #dc3a1f;box-shadow:0 0 2px 1px rgba(235,120,100,0.4), 1px 3px 4px rgba(40,20,10,0.4), inset 1px 2px 3px rgba(90,40,30,0.35)"></div>
<div style="position:absolute;left:316.1px;top:71.7px;width:111.29999999999995px;height:33.0px;box-sizing:border-box;border:3.8px solid #dc3a1f;box-shadow:0 0 2px 1px rgba(235,120,100,0.4), 1px 3px 4px rgba(40,20,10,0.4), inset 1px 2px 3px rgba(90,40,30,0.35)"></div>
<div style="position:absolute;left:17.0px;top:166.9px;width:643.0px;height:209.29999999999998px;box-sizing:border-box;border:4.2px solid #dc3a1f;box-shadow:0 0 2px 1px rgba(235,120,100,0.4), 1px 3px 4px rgba(40,20,10,0.4), inset 1px 2px 3px rgba(90,40,30,0.35)"></div>
</div></body></html>
